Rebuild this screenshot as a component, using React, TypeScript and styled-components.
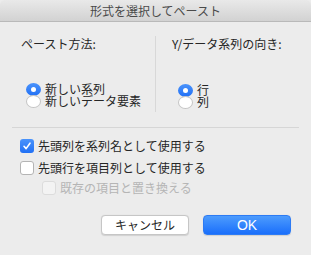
import React from "react";
import styled, { createGlobalStyle } from "styled-components";

const Global = createGlobalStyle`
  html, body { margin: 0; padding: 0; background: #ececec; }
  body { font-family: "Noto Sans CJK JP", "Noto Sans", sans-serif; }
`;

const Window = styled.div`
  width: 311px;
  height: 255px;
  background: #ececec;
  display: flex;
  flex-direction: column;
  overflow: hidden;
  font-family: "Noto Sans CJK JP", "Noto Sans", sans-serif;
  font-size: 12px;
  color: #262626;
`;

const TitleBar = styled.div`
  height: 21px;
  border-bottom: 1px solid #b9b9b9;
  background: linear-gradient(#e9e9e9, #d2d2d2);
  border-radius: 5px 5px 0 0;
  display: flex;
  align-items: center;
  justify-content: center;
  font-size: 12px;
  color: #4a4a4a;
  line-height: 21px;
`;

const Content = styled.div`
  padding: 0 12px;
  display: flex;
  flex-direction: column;
`;

const Columns = styled.div`
  margin-top: 14px;
  height: 76px;
  display: grid;
  grid-template-columns: 143px 1px 1fr;
`;

const Column = styled.div<{ $pad: number }>`
  display: flex;
  flex-direction: column;
  padding-left: ${(p) => p.$pad}px;
`;

const Heading = styled.div`
  line-height: 16px;
  height: 16px;
`;

const Divider = styled.div`
  background: #d8d8d8;
`;

const RadioGroup = styled.div<{ $top: number; $indent: number }>`
  margin-top: ${(p) => p.$top}px;
  padding-left: ${(p) => p.$indent}px;
  display: flex;
  flex-direction: column;
`;

const RadioRow = styled.div`
  height: 12px;
  display: flex;
  align-items: center;
  gap: 4px;
  line-height: 12px;
  white-space: nowrap;
`;

const RadioDot = styled.span<{ $on: boolean }>`
  flex: none;
  position: relative;
  width: 15px;
  height: 13px;
  border-radius: 50%;
  box-sizing: border-box;
  background: ${(p) => (p.$on ? "linear-gradient(#4a93fb, #2170f5)" : "#ffffff")};
  border: ${(p) => (p.$on ? "none" : "0.5px solid #c4c4c4")};
  display: flex;
  align-items: center;
  justify-content: center;
  &::after {
    content: "";
    display: ${(p) => (p.$on ? "block" : "none")};
    width: 5px;
    height: 5px;
    border-radius: 50%;
    background: #fff;
  }
`;

const Separator = styled.div`
  margin-top: 15px;
  height: 1px;
  background: #d6d6d6;
`;

const CheckList = styled.div`
  margin-top: 11px;
  display: flex;
  flex-direction: column;
`;

const CheckRow = styled.div<{ $indent: number; $gap: number; $disabled?: boolean }>`
  height: 14px;
  margin-top: ${(p) => p.$gap}px;
  padding-left: ${(p) => p.$indent}px;
  display: flex;
  align-items: center;
  gap: 4px;
  line-height: 14px;
  white-space: nowrap;
  color: ${(p) => (p.$disabled ? "#b5b5b5" : "#262626")};
`;

const Box = styled.span<{ $on?: boolean; $disabled?: boolean }>`
  flex: none;
  width: 14px;
  height: 14px;
  box-sizing: border-box;
  border-radius: 3px;
  display: flex;
  align-items: center;
  justify-content: center;
  background: ${(p) =>
    p.$on ? "linear-gradient(#4a93fb, #2170f5)" : p.$disabled ? "#f3f3f3" : "#ffffff"};
  border: ${(p) =>
    p.$on ? "none" : p.$disabled ? "0.5px solid #dcdcdc" : "0.5px solid #b4b4b4"};
`;

const ButtonRow = styled.div`
  margin-top: 20px;
  padding-right: 8px;
  display: flex;
  justify-content: flex-end;
  gap: 14px;
`;

const Button = styled.button<{ $primary?: boolean }>`
  width: 88px;
  height: 20px;
  padding: 0;
  box-sizing: border-box;
  border-radius: 4px;
  font-family: "Noto Sans CJK JP", "Noto Sans", sans-serif;
  font-size: 12px;
  line-height: 18px;
  color: ${(p) => (p.$primary ? "#ffffff" : "#262626")};
  background: ${(p) => (p.$primary ? "linear-gradient(#4d9cfd, #1a6ffb)" : "#ffffff")};
  border: ${(p) => (p.$primary ? "0.5px solid #2d7bf4" : "0.5px solid #c6c6c6")};
  box-shadow: 0 0.5px 1px rgba(0, 0, 0, 0.12);
`;

const OkLabel = styled.span`
  font-family: "Liberation Sans", "Noto Sans", sans-serif;
  font-size: 14px;
`;

const Check = () => (
  <svg width="10" height="10" viewBox="0 0 10 10">
    <polyline points="2,5.3 4.1,7.6 8,2.2" fill="none" stroke="#fff" strokeWidth="1.6" strokeLinecap="round" strokeLinejoin="round" />
  </svg>
);

export default function App() {
  return (
    <Window>
      <Global />
      <TitleBar>形式を選択してペースト</TitleBar>
      <Content>
        <Columns>
          <Column $pad={9}>
            <Heading>ペースト方法:</Heading>
            <RadioGroup $top={31} $indent={5}>
              <RadioRow>
                <RadioDot $on />
                新しい系列
              </RadioRow>
              <RadioRow>
                <RadioDot $on={false} />
                新しいデータ要素
              </RadioRow>
            </RadioGroup>
          </Column>
          <Divider />
          <Column $pad={16}>
            <Heading>Y/データ系列の向き:</Heading>
            <RadioGroup $top={32} $indent={6}>
              <RadioRow>
                <RadioDot $on />
                行
              </RadioRow>
              <RadioRow>
                <RadioDot $on={false} />
                列
              </RadioRow>
            </RadioGroup>
          </Column>
        </Columns>
        <Separator />
        <CheckList>
          <CheckRow $indent={8} $gap={0}>
            <Box $on>
              <Check />
            </Box>
            先頭列を系列名として使用する
          </CheckRow>
          <CheckRow $indent={8} $gap={8}>
            <Box />
            先頭行を項目列として使用する
          </CheckRow>
          <CheckRow $indent={30} $gap={6} $disabled>
            <Box $disabled />
            既存の項目と置き換える
          </CheckRow>
        </CheckList>
        <ButtonRow>
          <Button>キャンセル</Button>
          <Button $primary>
            <OkLabel>OK</OkLabel>
          </Button>
        </ButtonRow>
      </Content>
    </Window>
  );
}
